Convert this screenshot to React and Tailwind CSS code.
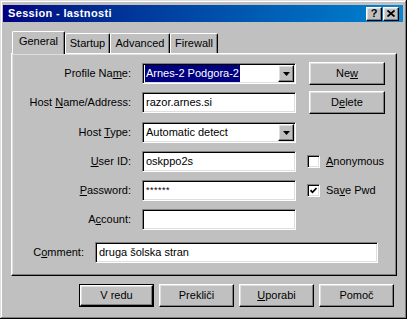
import React from "react";

const sunken =
  "border border-t-[#808080] border-l-[#808080] border-b-white border-r-white shadow-[inset_1px_1px_#000,inset_-1px_-1px_#dfdfdf] bg-white";
const raised =
  "border border-t-white border-l-white border-b-black border-r-black shadow-[inset_-1px_-1px_#808080,inset_1px_1px_#dfdfdf] bg-[#c0c0c0]";

function Arrow() {
  return (
    <svg width="7" height="4" viewBox="0 0 7 4">
      <path d="M0 0h7L3.5 4z" fill="#000" />
    </svg>
  );
}

function Combo({ children }) {
  return (
    <div className={`${sunken} w-[154px] h-[21px] flex items-stretch p-[1px]`}>
      <div className="flex-1 flex items-center pl-[1px] overflow-hidden whitespace-nowrap">{children}</div>
      <div className={`${raised} w-[16px] flex items-center justify-center`}>
        <Arrow />
      </div>
    </div>
  );
}

function Field({ children, w = "w-[154px]" }) {
  return (
    <div className={`${sunken} ${w} h-[21px] flex items-center pl-[3px] whitespace-nowrap overflow-hidden`}>
      {children}
    </div>
  );
}

function Label({ children }) {
  return <div className="w-[119px] text-right whitespace-nowrap">{children}</div>;
}

function Checkbox({ checked, children }) {
  return (
    <div className="flex items-center -ml-[2px]">
      <div className={`${sunken} w-[13px] h-[13px] flex items-center justify-center`}>
        {checked && (
          <svg width="7" height="7" viewBox="0 0 7 7">
            <path d="M0.5 3.2 L2.5 5.3 L6.5 1" stroke="#000" strokeWidth="1.7" fill="none" />
          </svg>
        )}
      </div>
      <div className="ml-[6px] whitespace-nowrap">{children}</div>
    </div>
  );
}

function Button({ children, w = "w-[76px]", def }) {
  if (def) {
    return (
      <div className={`${w} h-[23px] border border-black`}>
        <div className={`${raised} w-full h-full flex items-center justify-center`}>{children}</div>
      </div>
    );
  }
  return <div className={`${raised} ${w} h-[23px] flex items-center justify-center`}>{children}</div>;
}

function Row({ label, field, right, mt }) {
  return (
    <div className={`flex items-center h-[21px] ${mt}`}>
      <Label>{label}</Label>
      <div className="ml-[11px]">{field}</div>
      <div className="ml-[13px] w-[76px]">{right}</div>
    </div>
  );
}

export default function App() {
  return (
    <div className="w-[407px] h-[319px] bg-[#c0c0c0] font-['Liberation_Sans',Arial,sans-serif] text-[11px] text-black shadow-[inset_-1px_-1px_#000,inset_1px_1px_#dfdfdf,inset_-2px_-2px_#808080,inset_2px_2px_#fff] pt-[5px] pl-[3px] pr-[4px] flex flex-col">
      {/* title bar */}
      <div className="h-[17px] bg-gradient-to-r from-[#000080] to-[#1084d0] flex items-center justify-between pl-[5px] pr-[4px]">
        <div className="text-white font-bold text-[11px] tracking-[0.35px]">Session - lastnosti</div>
        <div className="flex items-center gap-[1px]">
          <div className={`${raised} w-[16px] h-[14px] flex items-center justify-center font-bold text-[11px] leading-none`}>?</div>
          <div className={`${raised} w-[16px] h-[14px] flex items-center justify-center`}>
            <svg width="8" height="7" viewBox="0 0 8 7">
              <path d="M0.5 0.5 L7.5 6.5 M7.5 0.5 L0.5 6.5" stroke="#000" strokeWidth="1.8" />
            </svg>
          </div>
        </div>
      </div>

      <div className="pl-[8px]">
        {/* tabs */}
        <div className="flex items-end h-[22px] mt-[9px] pl-[1px]">
          <div className="relative z-10 w-[53px] h-[23px] -mb-[1px] bg-[#c0c0c0] border-l border-t border-white border-r border-r-black shadow-[inset_-1px_0_#808080] rounded-t-[2px] flex items-center justify-center pb-[3px]">
            General
          </div>
          <div className="w-[45px] h-[20px] border-l border-t border-white border-r border-r-black shadow-[inset_-1px_0_#808080] rounded-t-[2px] flex items-center justify-center">
            Startup
          </div>
          <div className="w-[60px] h-[20px] border-l border-t border-white border-r border-r-black shadow-[inset_-1px_0_#808080] rounded-t-[2px] flex items-center justify-center">
            Advanced
          </div>
          <div className="w-[48px] h-[20px] border-l border-t border-white border-r border-r-black shadow-[inset_-1px_0_#808080] rounded-t-[2px] flex items-center justify-center">
            Firewall
          </div>
        </div>

        {/* panel */}
        <div className="w-[386px] h-[223px] border border-t-white border-l-white border-b-black border-r-black shadow-[inset_-1px_-1px_#808080,inset_1px_1px_#dfdfdf] pt-[9px] flex flex-col">
          <Row
            mt=""
            label={<>Profile Na<u>m</u>e:</>}
            field={
              <Combo>
                <span className="bg-[#000080] text-white px-[1px]">Arnes-2 Podgora-2</span>
              </Combo>
            }
            right={<Button>Ne<u>w</u></Button>}
          />
          <Row
            mt="mt-[8px]"
            label={<>Host <u>N</u>ame/Address:</>}
            field={<Field>razor.arnes.si</Field>}
            right={<Button>D<u>e</u>lete</Button>}
          />
          <Row
            mt="mt-[9px]"
            label={<>Host <u>T</u>ype:</>}
            field={
              <Combo>
                <span className="px-[1px]">Automatic detect</span>
              </Combo>
            }
          />
          <Row
            mt="mt-[8px]"
            label={<><u>U</u>ser ID:</>}
            field={<Field>oskppo2s</Field>}
            right={<Checkbox><u>A</u>nonymous</Checkbox>}
          />
          <Row
            mt="mt-[8px]"
            label={<><u>P</u>assword:</>}
            field={<Field><span className="text-[9px] tracking-[0.5px]">******</span></Field>}
            right={<Checkbox checked>Sa<u>v</u>e Pwd</Checkbox>}
          />
          <Row
            mt="mt-[8px]"
            label={<>A<u>c</u>count:</>}
            field={<Field />}
          />
          <div className="flex items-center h-[21px] mt-[12px]">
            <div className="w-[72px] text-right whitespace-nowrap">
              C<u>o</u>mment:
            </div>
            <div className="ml-[11px]">
              <Field w="w-[283px]">druga šolska stran</Field>
            </div>
          </div>
        </div>

        {/* bottom buttons */}
        <div className="w-[386px] flex justify-end gap-[5px] pr-[3px] mt-[8px]">
          <Button w="w-[75px]" def>V redu</Button>
          <Button w="w-[75px]">Prekliči</Button>
          <Button w="w-[75px]"><u>U</u>porabi</Button>
          <Button w="w-[75px]">Pomoč</Button>
        </div>
      </div>
    </div>
  );
}
